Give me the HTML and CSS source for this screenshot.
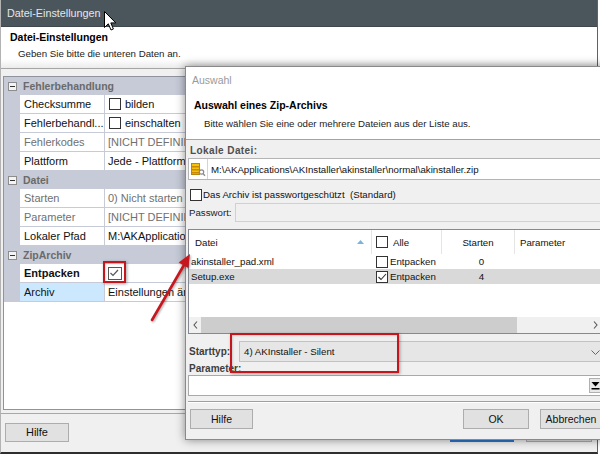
FILE: index.html
```html
<!DOCTYPE html>
<html lang="de">
<head>
<meta charset="utf-8">
<title>Datei-Einstellungen</title>
<link rel="stylesheet" href="styles.css">
</head>
<body>
<div class="screen">
  <div class="win">
    <div class="titlebar">Datei-Einstellungen</div>
    <div class="head">
      <div class="head-title">Datei-Einstellungen</div>
      <div class="head-sub">Geben Sie bitte die unteren Daten an.</div>
    </div>
    <div class="win-body">
      <div class="pgrid">
        <div class="cat"><span class="minus"></span>Fehlerbehandlung</div>
        <div class="prow"><span class="strip"></span><span class="lbl">Checksumme</span><span class="val"><span class="cb"></span>bilden</span></div>
        <div class="prow"><span class="strip"></span><span class="lbl">Fehlerbehandl...</span><span class="val"><span class="cb"></span>einschalten</span></div>
        <div class="prow"><span class="strip"></span><span class="lbl dim">Fehlerkodes</span><span class="val dim">[NICHT DEFINIERT]</span></div>
        <div class="prow"><span class="strip"></span><span class="lbl">Plattform</span><span class="val">Jede - Plattform</span></div>
        <div class="cat"><span class="minus"></span>Datei</div>
        <div class="prow"><span class="strip"></span><span class="lbl dim">Starten</span><span class="val dim">0) Nicht starten</span></div>
        <div class="prow"><span class="strip"></span><span class="lbl dim">Parameter</span><span class="val dim">[NICHT DEFINIERT]</span></div>
        <div class="prow"><span class="strip"></span><span class="lbl">Lokaler Pfad</span><span class="val">M:\AKApplications\AKInstaller</span></div>
        <div class="cat"><span class="minus"></span>ZipArchiv</div>
        <div class="prow"><span class="strip"></span><span class="lbl bold">Entpacken</span><span class="val"><span class="cb cb-gray"><svg viewBox="0 0 12 12" width="12" height="12"><polyline points="2.5,6 5,8.5 10,3" fill="none" stroke="#555" stroke-width="1.2"/></svg></span></span></div>
        <div class="prow"><span class="strip"></span><span class="lbl sel">Archiv</span><span class="val">Einstellungen ändern...</span></div>
        <div class="pfill"></div>
      </div>
    </div>
    <div class="win-foot">
      <div class="btn btn-help">Hilfe</div>
      <div class="foot-spacer"></div>
      <div class="btn btn-default">OK</div>
      <div class="btn btn-cancel">Abbrechen</div>
    </div>
  </div>

  <svg class="cursor" width="13" height="21" viewBox="0 0 13 21">
    <path d="M0.5,0.5 L0.5,16.5 L4.3,12.8 L7,19 L9.4,18 L6.8,11.9 L11.8,11.9 Z" fill="#fff" stroke="#000" stroke-width="1"/>
  </svg>

  <div class="dlg">
    <div class="d-title">Auswahl</div>
    <div class="d-head">
      <div class="d-head-title">Auswahl eines Zip-Archivs</div>
      <div class="d-head-sub">Bitte wählen Sie eine oder mehrere Dateien aus der Liste aus.</div>
    </div>
    <div class="d-body">
      <div class="d-label">Lokale Datei:</div>
      <div class="path">
        <span class="path-icon">
          <svg width="16" height="16" viewBox="0 0 16 16">
            <rect x="1.5" y="2.5" width="8" height="11" fill="#f4c20d" stroke="#b8860b"/>
            <rect x="2" y="5" width="7" height="1.5" fill="#c98a00"/>
            <rect x="2" y="8" width="7" height="1.5" fill="#c98a00"/>
            <rect x="2" y="11" width="7" height="1.5" fill="#c98a00"/>
            <circle cx="11.5" cy="11" r="2.2" fill="none" stroke="#8a8a8a" stroke-width="1.2"/>
            <line x1="13" y1="12.6" x2="15" y2="14.8" stroke="#8a8a8a" stroke-width="1.4"/>
          </svg>
        </span>
        <span class="path-text">M:\AKApplications\AKInstaller\akinstaller\normal\akinstaller.zip</span>
      </div>
      <div class="chk-row"><span class="cb"></span>Das Archiv ist passwortgeschützt&nbsp; (Standard)</div>
      <div class="pw-row"><span class="pw-label">Passwort:</span><span class="pw-field"></span></div>
      <div class="list">
        <div class="lhead">
          <div class="c1"><span>Datei</span><svg class="sort" width="7" height="4" viewBox="0 0 7 4"><polygon points="0,4 3.5,0 7,4" fill="#7fb2d9"/></svg></div>
          <div class="c2"><span class="cb"></span>Alle</div>
          <div class="c3">Starten</div>
          <div class="c4">Parameter</div>
        </div>
        <div class="lrow">
          <div class="c1">akinstaller_pad.xml</div>
          <div class="c2"><span class="cb"></span>Entpacken</div>
          <div class="c3">0</div>
          <div class="c4"></div>
        </div>
        <div class="lrow lsel">
          <div class="c1">Setup.exe</div>
          <div class="c2"><span class="cb"><svg viewBox="0 0 12 12" width="12" height="12"><polyline points="2.5,6 5,8.5 10,3" fill="none" stroke="#333" stroke-width="1.1"/></svg></span>Entpacken</div>
          <div class="c3">4</div>
          <div class="c4"></div>
        </div>
        <div class="lspace"></div>
        <div class="hscroll">
          <span class="sb-arrow"><svg width="5" height="8" viewBox="0 0 5 8"><polyline points="4,0.5 1,4 4,7.5" fill="none" stroke="#555" stroke-width="1.1"/></svg></span>
          <span class="sb-thumb"></span>
          <span class="sb-track"></span>
          <span class="sb-arrow"><svg width="5" height="8" viewBox="0 0 5 8"><polyline points="1,0.5 4,4 1,7.5" fill="none" stroke="#555" stroke-width="1.1"/></svg></span>
        </div>
      </div>
      <div class="st-row">
        <span class="st-label">Starttyp:</span>
        <span class="combo">4) AKInstaller - Silent<svg class="chev" width="9" height="5" viewBox="0 0 9 5"><polyline points="0.5,0.5 4.5,4.5 8.5,0.5" fill="none" stroke="#666" stroke-width="1"/></svg></span>
      </div>
      <div class="d-label2">Parameter:</div>
      <div class="param">
        <span class="param-btn"><svg width="9" height="9" viewBox="0 0 9 9"><polygon points="0.5,1 8.5,1 4.5,5.5" fill="#000"/><rect x="0.5" y="7" width="8" height="1.5" fill="#000"/></svg></span>
      </div>
      <div class="sep"></div>
      <div class="d-buttons">
        <div class="btn d-help">Hilfe</div>
        <div class="foot-spacer"></div>
        <div class="btn d-ok">OK</div>
        <div class="btn d-cancel">Abbrechen</div>
      </div>
    </div>
  </div>

  <div class="mark mark-check"></div>
  <div class="mark mark-combo"></div>

  <svg class="arrow" width="80" height="90" viewBox="0 0 80 90">
    <line x1="12" y1="72" x2="44" y2="17" stroke="#c8161e" stroke-width="2.6" stroke-linecap="round"/>
    <polygon points="50,6 48.3,20 38.7,14.6" fill="#c8161e"/>
  </svg>
</div>
</body>
</html>
```

FILE: styles.css
```css
* { box-sizing: border-box; }
html, body { margin: 0; padding: 0; background: #fff; }
body { font-family: "Liberation Sans", Arial, sans-serif; color: #1a1a1a; }

.screen { position: relative; width: 600px; height: 455px; overflow: hidden; background: #fff; }

/* back window */
.win {
  width: 598px; height: 454px;
  display: flex; flex-direction: column;
  background: #f0f0f0;
  border-left: 1px solid #b3b3b3;
  border-right: 1px solid #5a646b;
  border-bottom: 2px solid #2e2e2e;
}
.titlebar {
  flex: none; height: 27px; background: #4a555c; color: #e3e7e9;
  font-size: 10.8px; line-height: 27px; padding-left: 6px;
  border-bottom: 1px solid #3e484e;
}
.head {
  flex: none; height: 42px;
  background: linear-gradient(#fff 78%, #ebebeb);
  border-bottom: 1px solid #a5a5a5;
  padding: 4px 0 0 9px;
}
.head-title { font-weight: bold; font-size: 10.5px; line-height: 13px; color: #000; }
.head-sub { font-size: 9.7px; line-height: 13px; margin-top: 3px; padding-left: 8px; color: #222; }

.win-body { flex: none; height: 344px; padding: 7px 3px 3px 2px; }
.pgrid {
  height: 334px; border: 1px solid #8e939c; background: #fff;
  display: flex; flex-direction: column; overflow: hidden;
}
.cat {
  flex: none; height: 18px; background: #c6cbd7;
  display: flex; align-items: center;
  font-size: 10.5px; font-weight: bold; color: #6a6a6a;
  padding-left: 4px;
}
.minus {
  width: 9px; height: 9px; border: 1px solid #8d8d8d; background: #f4f4f4;
  margin-right: 6px; position: relative;
}
.minus::after { content: ""; position: absolute; left: 1px; top: 3px; width: 5px; height: 1px; background: #333; }
.prow { flex: none; height: 19px; display: flex; font-size: 11px; }
.strip { flex: none; width: 16px; background: #c6cbd7; }
.lbl {
  flex: none; width: 85px; padding-left: 4px; line-height: 18px;
  border-right: 1px solid #c6cbd7; border-bottom: 1px solid #c6cbd7;
  white-space: nowrap; overflow: hidden; color: #111;
}
.val {
  flex: 1; padding-left: 3px; line-height: 18px; border-bottom: 1px solid #c6cbd7;
  white-space: nowrap; overflow: hidden; display: flex; align-items: center; color: #111;
}
.dim { color: #707070; }
.bold { font-weight: bold; }
.sel { background: #cce8ff; }
.pfill { flex: 1; }

.cb {
  flex: none; display: inline-block; width: 12px; height: 12px;
  border: 1px solid #333; background: #fff; margin-right: 4px; position: relative;
}
.cb svg { position: absolute; left: -1px; top: -1px; }
.val .cb { margin-left: 1px; }
.cb-gray { width: 14px; height: 13px; border-color: #555; margin-left: 0 !important; }

.win-foot {
  flex: 1; display: flex; align-items: flex-start;
  border-top: 1px solid #a8a8a8; padding: 9px 4px 0 4px;
}
.btn {
  height: 19px; border: 1px solid #adadad; background: #e1e1e1;
  font-size: 10.5px; line-height: 17px; text-align: center; color: #111;
}
.btn-help { width: 64px; font-size: 11px; }
.foot-spacer { flex: 1; }
.btn-default { width: 64px; border-color: #2a78d2; border-width: 2px; margin-right: 12px; }
.btn-cancel { width: 66px; margin-right: 1px; }

.cursor { position: absolute; left: 104px; top: 11px; }

/* dialog */
.dlg {
  position: absolute; left: 185px; top: 66px;
  width: 422px; height: 374px;
  background: #f0f0f0; border: 1px solid #8a8a8a;
  box-shadow: 0 0 9px rgba(0,0,0,0.45);
  display: flex; flex-direction: column;
}
.d-title {
  flex: none; height: 26px; background: #fff; color: #9a9a9a;
  font-size: 10.5px; line-height: 26px; padding-left: 6px;
}
.d-head {
  flex: none; height: 47px; background: #fff;
  border-bottom: 1px solid #a3a3a3; padding: 6px 0 0 8px;
}
.d-head-title { font-weight: bold; font-size: 10.5px; line-height: 12px; color: #000; }
.d-head-sub { font-size: 9.7px; line-height: 12px; margin-top: 7px; padding-left: 10px; color: #222; }

.d-body { flex: 1; display: flex; flex-direction: column; padding: 0 4px 0 2px; font-size: 9.7px; }
.d-label {
  margin-top: 5px; height: 12px; line-height: 12px; padding-left: 2px;
  font-weight: bold; font-size: 10px; letter-spacing: 0.4px; color: #4e4e4e;
}
.path {
  margin-top: 1px; height: 22px; background: #fff; border: 1px solid #b4b4b4;
  display: flex; align-items: center;
}
.path-icon {
  flex: none; width: 19px; height: 20px; border-right: 1px solid #d4d4d4;
  display: flex; align-items: center; justify-content: center;
}
.path-text { padding-left: 3px; white-space: nowrap; color: #111; }
.chk-row {
  margin-top: 9px; height: 12px; line-height: 12px; display: flex; align-items: center;
  padding-left: 2px; color: #111;
}
.chk-row .cb { margin-right: 1px; }
.pw-row { margin-top: 2px; height: 19px; display: flex; align-items: center; }
.pw-label { flex: none; width: 47px; padding-left: 1px; color: #222; white-space: nowrap; }
.pw-field { flex: 1; height: 19px; border: 1px solid #d0d0d0; background: #f0f0f0; }

.list {
  margin-top: 7px; height: 105px; background: #fff; border: 1px solid #848890;
  display: flex; flex-direction: column; overflow: hidden; color: #111;
}
.lhead { flex: none; height: 24px; display: flex; align-items: stretch; }
.lhead > div { display: flex; align-items: center; border-right: 1px solid #e5e5e5; }
.lhead > div.c4 { border-right: none; }
.c1 { flex: none; width: 183px; padding-left: 2px; white-space: nowrap; }
.c2 { flex: none; width: 70px; padding-left: 4px; display: flex; align-items: center; white-space: nowrap; }
.c3 { flex: none; width: 73px; text-align: center; justify-content: center; }
.c4 { flex: 1; padding-left: 5px; }
.lhead .c1 { padding-left: 6px; justify-content: space-between; padding-right: 7px; }
.lhead .c2 .cb { margin-right: 5px; }
.lrow { flex: none; height: 15px; display: flex; align-items: center; }
.lrow .c2 .cb { width: 12px; height: 12px; margin-right: 2px; }
.lrow .c2 { padding-left: 4px; }
.lrow .c3 { display: block; padding-left: 6px; }
.lsel { background: #d9d9d9; }
.lspace { flex: 1; }
.hscroll { flex: none; height: 16px; display: flex; background: #f0f0f0; }
.sb-arrow { flex: none; width: 12px; display: flex; align-items: center; justify-content: center; }
.sb-thumb { flex: none; width: 316px; background: #cdcdcd; }
.sb-track { flex: 1; }

.st-row { margin-top: 7px; height: 21px; display: flex; align-items: center; }
.st-label { flex: none; width: 51px; padding-left: 1px; font-weight: bold; font-size: 10px; color: #3e3e3e; }
.combo {
  flex: 1; height: 21px; background: #e6e6e6; border: 1px solid #c2c2c2;
  display: flex; align-items: center; padding-left: 4px; position: relative; color: #111;
}
.chev { position: absolute; right: 1px; top: 8px; }
.d-label2 { height: 13px; line-height: 13px; padding-left: 1px; font-weight: bold; font-size: 10px; color: #3e3e3e; }
.param {
  height: 21px; background: #fff; border: 1px solid #a9a9a9;
  display: flex; justify-content: flex-end; align-items: center;
}
.param-btn {
  width: 12px; height: 15px; background: #e8e8e8; border: 1px solid #b0b0b0;
  display: flex; align-items: center; justify-content: center;
}
.sep { margin-top: 5px; height: 2px; border-top: 1px solid #a0a0a0; border-bottom: 1px solid #fff; }
.d-buttons { margin-top: 6px; display: flex; }
.d-help { width: 63px; height: 20px; line-height: 18px; margin-left: 2px; }
.d-ok { width: 66px; height: 20px; line-height: 18px; margin-right: 11px; }
.d-cancel { width: 62px; height: 20px; line-height: 18px; }

/* annotations */
.mark {
  position: absolute; border: 2px solid #c5161d;
  box-shadow: 1px 1px 3px rgba(0,0,0,0.35), inset 1px 1px 2px rgba(0,0,0,0.15);
}
.mark-check { left: 103px; top: 261px; width: 23px; height: 22px; }
.mark-combo { left: 230px; top: 333px; width: 169px; height: 40px; }
.arrow { position: absolute; left: 140px; top: 248px; filter: drop-shadow(1px 1px 1px rgba(0,0,0,0.35)); }
```
